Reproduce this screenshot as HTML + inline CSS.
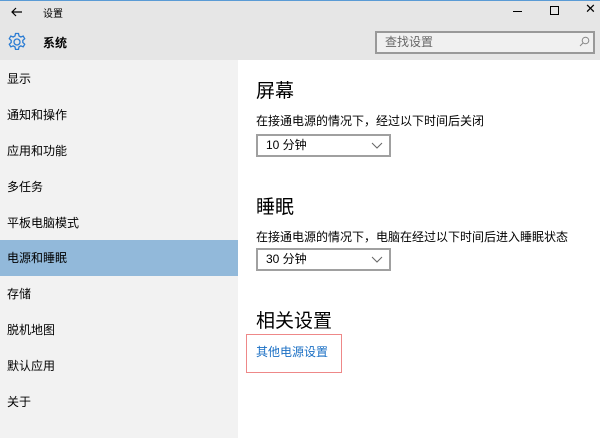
<!DOCTYPE html><html><head><meta charset="utf-8"><style>
*{margin:0;padding:0;box-sizing:border-box}
body{width:600px;height:438px;overflow:hidden;position:relative;background:#fff;font-family:"Liberation Sans","Noto Sans CJK SC",sans-serif;color:#000}
.a{position:absolute}
.top{left:0;top:0;width:600px;height:60px;background:#e6e6e6;border-top:1px solid #5a9bd5}
.side{left:0;top:60px;width:238px;height:378px;background:#f2f2f2}
.it{position:absolute;left:7px;font-size:12px;line-height:16px}
.sel{left:0;top:240px;width:238px;height:36px;background:#92b9da}
h2{position:absolute;font-weight:normal;font-size:19px;left:256px}
.d{position:absolute;left:256px;font-size:12px}
.sb{position:absolute;left:256px;width:135px;height:23px;border:2px solid #a0a0a0;font-size:12px;padding-left:8px;line-height:19px}
.sb svg{position:absolute;right:6px;top:6px}
</style></head><body>
<div class="a top"></div>
<svg class="a" style="left:10px;top:6px" width="14" height="12" viewBox="0 0 14 12"><path d="M12 6H2M6 2L2 6l4 4" stroke="#000" fill="none" stroke-width="1.2"/></svg>
<div class="a" style="left:43px;top:5px;font-size:10px">设置</div>
<div class="a" style="left:513px;top:11px;width:9px;height:1px;background:#000;z-index:2"></div>
<div class="a" style="left:550px;top:6px;width:9px;height:9px;border:1px solid #000"></div>
<div class="a" style="left:585px;top:1px;font-size:13px">✕</div>
<svg class="a" style="left:7px;top:32px" width="20" height="20" viewBox="0 0 20 20"><path d="M8.5 1.5h3l.5 2.5 1.8 1 2.4-.9 1.5 2.6-1.9 1.7v2.1l1.9 1.7-1.5 2.6-2.4-.9-1.8 1-.5 2.5h-3l-.5-2.5-1.8-1-2.4.9-1.5-2.6 1.9-1.7V8.4L2.3 6.7l1.5-2.6 2.4.9 1.8-1z" fill="none" stroke="#2b7cd3" stroke-width="1.3"/><circle cx="10" cy="10" r="3" fill="none" stroke="#2b7cd3" stroke-width="1.3"/></svg>
<div class="a" style="left:43px;top:34px;font-size:12px;font-weight:bold">系统</div>
<div class="a" style="left:375px;top:31px;width:220px;height:23px;border:2px solid #999;background:#f0f0f0;font-size:12px;color:#666;padding-left:8px;line-height:19px">查找设置</div>
<svg class="a" style="left:579px;top:36px" width="11" height="11" viewBox="0 0 11 11"><circle cx="6.5" cy="4.5" r="3.3" fill="none" stroke="#888"/><path d="M4 7L1 10" stroke="#888"/></svg>
<div class="a side"></div>
<div class="a sel"></div>
<div class="it" style="top:71px">显示</div>
<div class="it" style="top:107px">通知和操作</div>
<div class="it" style="top:143px">应用和功能</div>
<div class="it" style="top:179px">多任务</div>
<div class="it" style="top:215px">平板电脑模式</div>
<div class="it" style="top:250px">电源和睡眠</div>
<div class="it" style="top:286px">存储</div>
<div class="it" style="top:322px">脱机地图</div>
<div class="it" style="top:358px">默认应用</div>
<div class="it" style="top:394px">关于</div>
<h2 style="top:76px">屏幕</h2>
<div class="d" style="top:112px">在接通电源的情况下，经过以下时间后关闭</div>
<div class="sb" style="top:134px">10 分钟<svg width="12" height="8"><path d="M1 1l5 5 5-5" stroke="#666" fill="none"/></svg></div>
<h2 style="top:192px">睡眠</h2>
<div class="d" style="top:228px">在接通电源的情况下，电脑在经过以下时间后进入睡眠状态</div>
<div class="sb" style="top:248px">30 分钟<svg width="12" height="8"><path d="M1 1l5 5 5-5" stroke="#666" fill="none"/></svg></div>
<h2 style="top:306px">相关设置</h2>
<div class="a" style="left:246px;top:334px;width:96px;height:39px;border:1px solid #e88"></div>
<div class="d" style="top:343px;color:#1a6fc4">其他电源设置</div>
</body></html>
